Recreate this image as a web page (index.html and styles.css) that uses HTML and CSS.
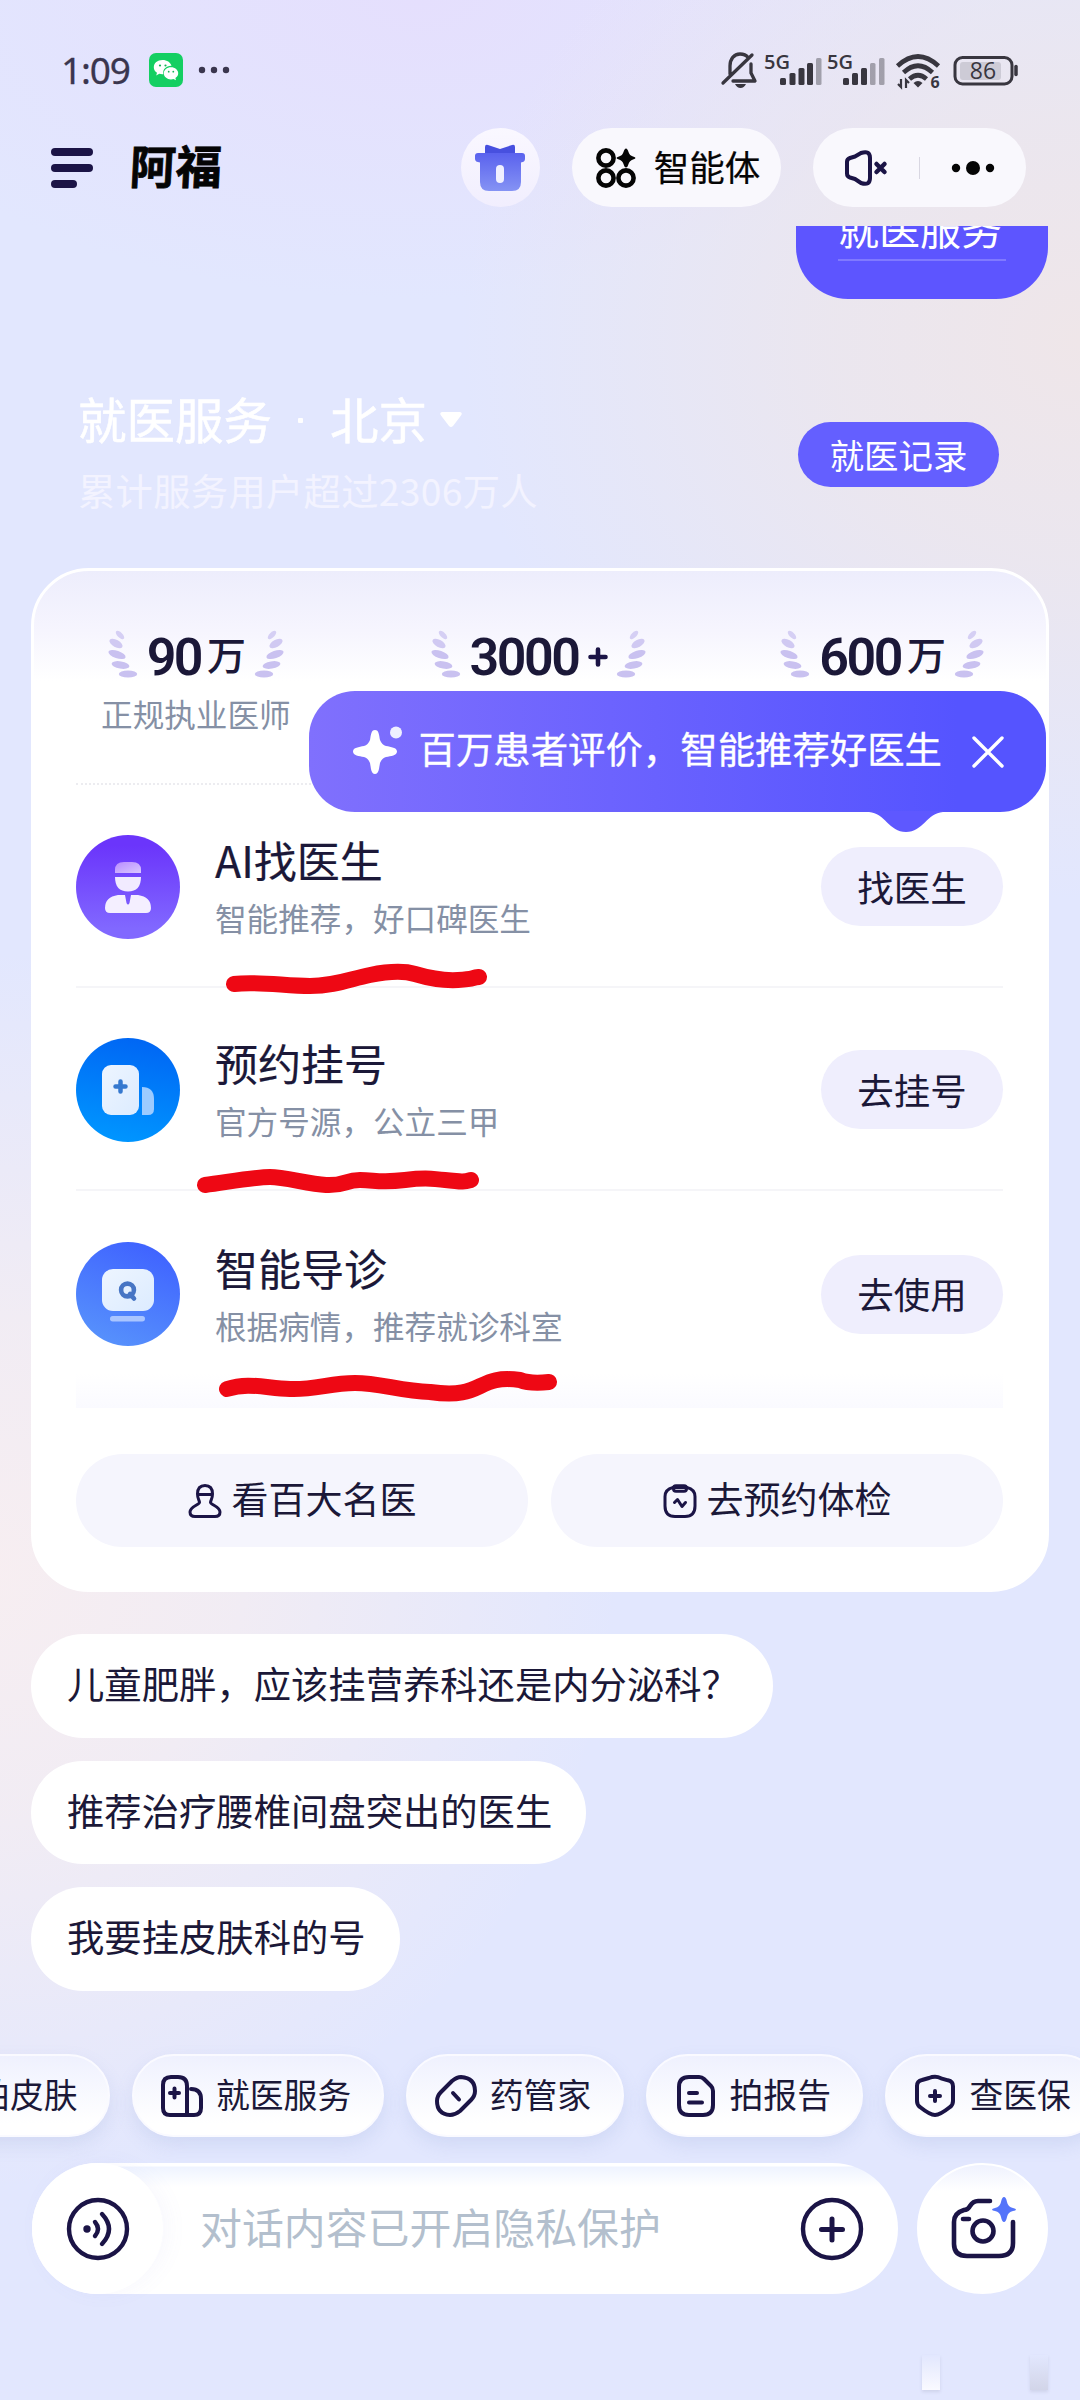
FILE: index.html
```html
<!DOCTYPE html>
<html lang="zh-CN">
<head>
<meta charset="utf-8">
<title>阿福</title>
<link rel="stylesheet" href="styles.css">
</head>
<body>
<svg width="0" height="0" class="defs" aria-hidden="true">
  <defs>
    <g id="laurel" fill="#c9c1f0">
      <ellipse cx="12" cy="5" rx="5.4" ry="2.6" transform="rotate(45 12 5)" opacity=".75"/>
      <ellipse cx="8" cy="13.5" rx="7.2" ry="3.6" transform="rotate(28 8 13.5)" opacity=".85"/>
      <ellipse cx="9" cy="24.5" rx="9" ry="3.7" transform="rotate(19 9 24.5)"/>
      <ellipse cx="12.5" cy="35" rx="9" ry="3.6" transform="rotate(10 12.5 35)"/>
      <ellipse cx="20" cy="44" rx="9.2" ry="3.6"/>
    </g>
    <linearGradient id="giftG" x1="0" y1="0" x2="0" y2="1"><stop offset="0" stop-color="#5a62ee"/><stop offset="1" stop-color="#8593f4"/></linearGradient>
    <linearGradient id="capG" x1="0" y1="0" x2="1" y2="1"><stop offset="0" stop-color="#b98cff"/><stop offset="1" stop-color="#d9c8ff"/></linearGradient>
    <linearGradient id="paper" x1="0" y1="0" x2="1" y2="1"><stop offset="0" stop-color="#edf5ff"/><stop offset="1" stop-color="#dcebff"/></linearGradient>
  </defs>
</svg>
<div class="phone">
  <div class="status">
    <div class="status-left">
      <span class="clock">1:09</span>
      <svg class="wechat" width="34" height="34" viewBox="0 0 34 34"><rect width="34" height="34" rx="7" fill="#14cf62"/><path d="M13.500 7c-5 0-8.700 3.100-8.700 7.200 0 2.300 1.200 4.300 3.200 5.600l-.8 2.600 3.100-1.600c1.500.5 3 .5 4 .4-.8-5 3-8.600 8.200-8.400C21.500 9.300 18 7 13.500 7z" fill="#fff"/><path d="M22 14.200c-4 0-7.200 2.700-7.200 6.100s3.200 6.100 7.200 6.100c.9 0 1.700-.1 2.500-.4l2.500 1.300-.6-2.200c1.800-1.100 2.800-2.800 2.800-4.800 0-3.400-3.200-6.100-7.200-6.100z" fill="#fff"/><g fill="#14b557"><circle cx="11" cy="12.500" r="1.100"/><circle cx="16.500" cy="12.500" r="1.100"/><circle cx="19.700" cy="18.700" r=".9"/><circle cx="24.300" cy="18.700" r=".9"/></g></svg>
      <svg width="32" height="8" viewBox="0 0 32 8" fill="#3a364e"><circle cx="4" cy="4" r="3.200"/><circle cx="16" cy="4" r="3.200"/><circle cx="28" cy="4" r="3.200"/></svg>
    </div>
    <svg class="status-right" width="300" height="44" viewBox="0 0 300 44">
      <g fill="none" stroke="#38363f" stroke-width="3.300" stroke-linecap="round" stroke-linejoin="round">
        <path d="M10 24V16c0-7 4-12 10-12 4 0 6.500 1.500 8 3.500M31 14v9l4 8H13M3 33L32 5"/>
      </g>
      <path d="M15 34h11q-2 4-5.500 4T15 34z" fill="#38363f"/>
      <g fill="#38363f"><text class="net" x="44" y="18.500">5G</text><text class="net" x="107" y="18.500">5G</text>
        <rect x="60" y="28" width="6" height="7" rx="1.500"/><rect x="69.500" y="23" width="6" height="12" rx="1.500"/><rect x="78.500" y="18" width="6" height="17" rx="1.500"/><rect x="87" y="13" width="6" height="22" rx="1.500"/><rect x="96" y="8" width="5.500" height="27" rx="1.500" opacity=".4"/>
        <rect x="123" y="28" width="6" height="7" rx="1.500"/><rect x="132" y="23" width="6" height="12" rx="1.500"/><rect x="141" y="18" width="6" height="17" rx="1.500"/><rect x="150" y="13" width="5.500" height="22" rx="1.500" opacity=".4"/><rect x="159" y="8" width="5.500" height="27" rx="1.500" opacity=".4"/>
        <path d="M193.500 33q4.500-4 9 0l-4.500 4.500z"/>
        <text class="six" x="210.500" y="37.500">6</text></g>
      <path d="M177.500 16q20.500-19 41 0M183.500 22.500q14.500-13.500 29 0M189.500 29q8.500-7.500 17 0" fill="none" stroke="#38363f" stroke-width="4.600"/>
      <path d="M181 29v8l-3-3M186 38v-8l3 3" stroke="#38363f" stroke-width="2.200" fill="none"/>
      <rect x="235" y="7.500" width="57" height="26.500" rx="7.500" fill="none" stroke="#38363f" stroke-width="3"/><rect x="240" y="12" width="41" height="18" rx="3" fill="#cdcbd6"/><path d="M296 16.500v8" stroke="#38363f" stroke-width="3.500" stroke-linecap="round"/>
      <text class="batt" x="263" y="29" text-anchor="middle" fill="#38363f">86</text>
    </svg>
  </div>

  <header class="header">
    <svg width="42" height="40" viewBox="0 0 42 40" fill="#1b1446"><rect width="42" height="8" rx="4"/><rect y="16" width="42" height="8" rx="4"/><rect y="32" width="26" height="8" rx="4"/></svg>
    <h1 class="brand">阿福</h1>
    <div class="gift"><svg width="50" height="48" viewBox="0 0 50 48"><path d="M10 12V3q0-3 3-2l12 4 12-4q3-1 3 2v9z" fill="#4750df"/><path d="M3 9h44q3 0 3 3v3q0 3-4 3.500V38q0 9-9 9H14q-9 0-9-9V18.500Q0 18 0 15v-3q0-3 3-3z" fill="url(#giftG)"/><rect x="21" y="21" width="8" height="18" rx="4" fill="#f0f0ff"/></svg></div>
    <div class="pill agents"><svg width="40" height="40" viewBox="0 0 40 40"><g fill="none" stroke="#050505" stroke-width="4.600"><circle cx="10" cy="10" r="7.600"/><circle cx="10" cy="30" r="7.600"/><circle cx="30" cy="30" r="7.600"/></g><path d="M30 .5q1.500 0 2.500 3.500 1 3.500 4.500 4.500 2.500.7 2.500 1.500t-2.500 1.500q-3.500 1-4.500 4.500T30 19.500 27.500 16q-1-3.500-4.500-4.500-2.500-.7-2.500-1.500t2.500-1.500q3.500-1 4.500-4.500T30 .5z" fill="#050505"/></svg><span>智能体</span></div>
    <div class="pill controls">
      <svg width="44" height="36" viewBox="0 0 44 36" fill="none" stroke="#1b1446" stroke-width="4" stroke-linejoin="round" stroke-linecap="round"><path d="M3 12q0-3 3-4l5-1.500 6-3.500q9-3 9 5v20q0 8-9 5l-6-4-5-1.500q-3-1-3-4z"/><path d="M32.500 14l8 8M40.500 14l-8 8" stroke-width="4.500"/></svg>
      <i class="bar"></i>
      <svg width="44" height="14" viewBox="0 0 44 14" fill="#050505"><circle cx="5" cy="7" r="4.200"/><circle cx="22" cy="7" r="7"/><circle cx="39" cy="7" r="4.200"/></svg>
    </div>
  </header>

  <main class="feed">
    <div class="sent"><span>就医服务</span></div>
    <section class="banner">
      <div>
        <h2>就医服务<i class="dot"></i>北京<svg width="24" height="16" viewBox="0 0 24 16" fill="#fff"><path d="M3 0h18q3 1 1 3.500L14 14q-2 2-4 0L2 3.500Q0 1 3 0z"/></svg></h2>
        <p>累计服务用户超过2306万人</p>
      </div>
      <button class="record">就医记录</button>
    </section>

    <section class="card">
      <div class="stats">
        <div class="stat"><div class="num"><svg width="30" height="48" viewBox="0 0 30 48"><use href="#laurel"/></svg><strong>90</strong><em>万</em><svg class="flip" width="30" height="48" viewBox="0 0 30 48"><use href="#laurel"/></svg></div><small>正规执业医师</small></div>
        <div class="stat"><div class="num"><svg width="30" height="48" viewBox="0 0 30 48"><use href="#laurel"/></svg><strong>3000</strong><svg class="plus" width="20" height="20" viewBox="0 0 20 20"><path d="M2.500 10h15M10 2.500v15" stroke="#1b1446" stroke-width="4.600" stroke-linecap="round"/></svg><svg class="flip" width="30" height="48" viewBox="0 0 30 48"><use href="#laurel"/></svg></div></div>
        <div class="stat"><div class="num"><svg width="30" height="48" viewBox="0 0 30 48"><use href="#laurel"/></svg><strong>600</strong><em>万</em><svg class="flip" width="30" height="48" viewBox="0 0 30 48"><use href="#laurel"/></svg></div></div>
      </div>

      <div class="row">
        <svg class="ico" viewBox="0 0 104 104"><defs><linearGradient id="g1" x1="0" y1="0" x2="0" y2="1"><stop offset=".1" stop-color="#6b35fb"/><stop offset=".9" stop-color="#8168ff"/></linearGradient></defs><circle cx="52" cy="52" r="52" fill="url(#g1)"/><path d="M39 38V35q0-8 9-8h8q9 0 9 8v3z" fill="url(#capG)"/><path d="M39 42h26q0 14.500-13 14.500T39 42z" fill="#f1ebff"/><path d="M42 60h7l1.500 8q1.500 3 3 0L55 60h7q13 2 13 13 0 5-5 5H34q-5 0-5-5 0-11 13-13z" fill="#f4efff"/></svg>
        <div class="info"><h3>AI找医生</h3><p>智能推荐，好口碑医生</p></div>
        <button>找医生</button>
      </div>
      <div class="row">
        <svg class="ico" viewBox="0 0 104 104"><defs><linearGradient id="g2" x1=".6" y1="0" x2=".4" y2="1"><stop offset="0" stop-color="#0066f4"/><stop offset="1" stop-color="#0096ff"/></linearGradient></defs><circle cx="52" cy="52" r="52" fill="url(#g2)"/><rect x="26" y="27" width="37" height="50" rx="9" fill="url(#paper)"/><path d="M66 49q12 0 12 12v10q0 6-6 6h-6z" fill="#9ccbff"/><path d="M44.500 43.500v10M39.500 48.500h10" stroke="#3578cf" stroke-width="4.500" stroke-linecap="round"/></svg>
        <div class="info"><h3>预约挂号</h3><p>官方号源，公立三甲</p></div>
        <button>去挂号</button>
      </div>
      <div class="row last">
        <svg class="ico" viewBox="0 0 104 104"><defs><linearGradient id="g3" x1=".7" y1="0" x2=".3" y2="1"><stop offset="0" stop-color="#3f62ff"/><stop offset="1" stop-color="#5792fc"/></linearGradient></defs><circle cx="52" cy="52" r="52" fill="url(#g3)"/><rect x="26" y="27" width="52" height="42" rx="11" fill="url(#paper)"/><rect x="34" y="74" width="35" height="5.500" rx="2.700" fill="#a9c5ff"/><g fill="none" stroke="#4775c4" stroke-width="4.600" stroke-linecap="round"><circle cx="51.500" cy="48" r="6.400"/><path d="M54 52l4 4.500"/></g></svg>
        <div class="info"><h3>智能导诊</h3><p>根据病情，推荐就诊科室</p></div>
        <button>去使用</button>
      </div>

      <div class="links">
        <button><svg width="34" height="34" viewBox="0 0 34 34" fill="none" stroke="#1b1446" stroke-width="3" stroke-linejoin="round"><path d="M9.500 10q0-8.500 7.500-8.500t7.500 8.500c0 5-2 6-2 8.500 0 2 9.500 4 9.500 9.500 0 3-1.500 4.500-5 4.500H7C3.500 32.500 2 31 2 28c0-5.500 9.500-7.500 9.500-9.500 0-2.500-2-3.500-2-8.500zM9.500 10.500h15"/></svg><span>看百大名医</span></button>
        <button><svg width="34" height="34" viewBox="0 0 34 34" fill="none" stroke="#1b1446" stroke-width="3" stroke-linejoin="round" stroke-linecap="round"><path d="M10 3.500h14q8 2 8 9V22q0 10.500-10 10.500H12Q2 32.500 2 22v-9.500q0-7 8-9z"/><rect x="10.500" y="1.800" width="13" height="5.500" rx="2.500"/><path d="M11.500 18.500l3-3 4.500 7 3.500-4"/></svg><span>去预约体检</span></button>
      </div>

      <div class="tip">
        <svg width="50" height="52" viewBox="0 0 50 52"><path d="M22 4c4 0 4 5 5 10q2 5 6 6c5 1 11 1.500 11 5.500s-6 4.500-11 5.500q-4 1-6 6c-1 5-1 11-5 11s-4-6-5-11q-2-5-6-6C6 30 0 29.500 0 25.500S6 21 11 20q4-1 6-6c1-5 1-10 5-10z" fill="#fff"/><circle cx="43" cy="6.500" r="6" fill="#eef0ff"/></svg>
        <span>百万患者评价，智能推荐好医生</span>
        <svg class="close" width="32" height="32" viewBox="0 0 32 32" stroke="#fff" stroke-width="3.400" stroke-linecap="round"><path d="M2 2l28 28M30 2L2 30"/></svg>
        <svg class="tail" width="74" height="22" viewBox="0 0 74 22"><path d="M0 0v1c16 1 20 20 37 20S58 2 74 1V0z" fill="#5e58ff"/></svg>
      </div>
      <svg class="marks" width="1018" height="1024" viewBox="31 568 1018 1024" fill="none" stroke="#ee0814" stroke-width="16" stroke-linecap="round" stroke-linejoin="round">
        <path d="M234 984C258 981 285 986 310 986S350 979 370 975S405 971 415 974S440 981 458 980S470 978 479 977"/>
        <path d="M205 1185C228 1182 255 1177 270 1177S308 1184 326 1185S345 1180 360 1180S380 1183 405 1180S430 1179 445 1180S460 1183 471 1180"/>
        <path d="M227 1389C248 1382 265 1388 290 1389S330 1383 355 1383S400 1391 430 1392C485 1400 475 1374 520 1380Q530 1384 549 1382"/>
      </svg>
    </section>

    <div class="ask">儿童肥胖，应该挂营养科还是内分泌科？</div>
    <div class="ask">推荐治疗腰椎间盘突出的医生</div>
    <div class="ask">我要挂皮肤科的号</div>
  </main>

  <footer class="dock">
    <nav class="tools">
      <div class="chip"><span>拍皮肤</span></div>
      <div class="chip"><svg width="42" height="42" viewBox="0 0 42 42"><path d="M2 10q0-8 8-8h7q9 0 9 9v29H9q-7 0-7-7zM30 14q10 0 10 10v9q0 7-7 7h-7M13.500 13.500v9M9 18h9"/></svg><span>就医服务</span></div>
      <div class="chip"><svg width="42" height="42" viewBox="0 0 42 42"><path d="M17 6q5-4 9-4 14 1 14 14 0 5-4 9L25 36q-5 4-10 4Q2 39 2 26q0-5 4-9zM18 18l6 6.500"/></svg><span>药管家</span></div>
      <div class="chip"><svg width="42" height="42" viewBox="-2 0 42 42"><path d="M12 2h10q3 0 5 2l7 7q2 2 2 5v14q0 10-10 10H12Q2 40 2 30V12Q2 2 12 2zM12 18h8M12 27.500h13"/></svg><span>拍报告</span></div>
      <div class="chip"><svg width="42" height="42" viewBox="-1 0 42 42"><path d="M20 1.800q3 0 6 1.500l7 2q5 1 5 6V26q0 4-3 6-10 8-15 8T5 32q-3-2-3-6V11q0-5 5-6l7-2q3-1.200 6-1.200zM20 16v10M15 21h10"/></svg><span>查医保</span></div>
    </nav>
    <div class="composer">
      <div class="input">
        <div class="voice"><svg width="64" height="64" viewBox="0 0 64 64" fill="none" stroke="#1b1446" stroke-width="4.400" stroke-linecap="round"><circle cx="32" cy="32" r="29"/><circle cx="21" cy="32" r="3.700" fill="#1b1446" stroke="none"/><path d="M29 25q6 7 0 14M36 17q14 15 0 30"/></svg></div>
        <span class="placeholder">对话内容已开启隐私保护</span>
        <svg width="64" height="64" viewBox="0 0 64 64" fill="none" stroke="#1b1446" stroke-width="4.400" stroke-linecap="round"><circle cx="32" cy="32" r="29"/><path d="M32 22v21M21.500 32.500h21" stroke-width="5"/></svg>
      </div>
      <div class="camera"><svg width="64" height="62" viewBox="0 0 64 62" fill="none" stroke="#1b1446" stroke-width="4.600" stroke-linecap="round" stroke-linejoin="round"><path d="M38 5H26q-5 0-8 5-2 4-6 4-10 3-10 12v22q0 12 13 12h32q14 0 14-13V26M11 23h6"/><circle cx="31" cy="35" r="10.500"/><path d="M52 1q2 0 3 5t6 6q3 .5 3 1.500t-3 1.500q-5 1-6 6t-3 5-3-5-6-6q-3-.5-3-1.500t3-1.500q5-1 6-6t3-5z" fill="#5474fa" stroke="none"/></svg></div>
    </div>
    <div class="ghost"><i></i><i></i></div>
  </footer>
</div>
</body>
</html>
```
FILE: styles.css
```css
* { box-sizing: border-box; margin: 0; padding: 0; }
body { width: 1080px; font-family: "Noto Sans CJK SC", sans-serif; color: #1b1838; }
svg { display: block; flex: none; overflow: visible; }
button { border: 0; font: inherit; color: inherit; }
.defs { position: absolute; }

.phone {
  width: 1080px; height: 2400px; overflow: hidden; display: flex; flex-direction: column;
  background:
    radial-gradient(ellipse 620px 560px at 1080px 340px, #efe6e9 0%, rgba(237,230,235,.8) 40%, rgba(234,230,245,0) 100%),
    radial-gradient(ellipse 640px 620px at -20px 1570px, #f7eef1 0%, rgba(244,237,242,.85) 40%, rgba(235,234,248,0) 100%),
    radial-gradient(ellipse 600px 300px at 420px 0, #e5dffd 0%, rgba(228,224,254,0) 100%),
    #e2e7fe;
}

.status { height: 128px; padding: 14px 60px 0 61px; display: flex; justify-content: space-between; align-items: flex-start; }
.status-left { display: flex; align-items: center; height: 84px; padding-top: 28px; gap: 15px; }
.status-left .wechat { margin-left: 4px; }
.clock { font: 400 37px/56px "Noto Sans", sans-serif; letter-spacing: -1.2px; color: #3a364e; width: 69px; -webkit-text-stroke: .3px #3a364e; }
.status-right { margin-top: 36px; }
.net { font: 600 20px "Open Sans", sans-serif; }
.six { font: 700 16px "Open Sans", sans-serif; }
.batt { font: 500 23px "Open Sans", sans-serif; }

.header { height: 79px; padding: 0 54px 0 51px; display: flex; align-items: center; flex: none; }
.brand { font-size: 46px; font-weight: 700; line-height: 78px; width: 94px; margin: -7px 0 0 37px; white-space: nowrap; color: #050505; -webkit-text-stroke: .8px #050505; transform: skewX(-3deg); }
.gift { width: 79px; height: 79px; margin-left: 237px; border-radius: 50%; background: linear-gradient(#faf8ff, #f1eefe); display: flex; align-items: center; justify-content: center; }
.pill { height: 79px; border-radius: 40px; background: #f9f8fd; display: flex; align-items: center; }
.agents { width: 210px; margin-left: 32px; padding-left: 24px; gap: 18px; font-size: 35.500px; color: #050505; white-space: nowrap; -webkit-text-stroke: .2px; }
.agents span { margin-top: -5px; }
.controls { width: 213px; margin-left: 32px; padding-left: 31px; }
.bar { width: 1px; height: 22px; background: #d9d7e2; margin: 0 31px 0 31px; }

.feed { margin-top: 19px; height: 1804px; flex: none; overflow: hidden; padding: 0 31px; display: flex; flex-direction: column; align-items: flex-start; }
.sent { align-self: flex-end; margin-top: -58px; width: 252px; height: 130.500px; flex: none; border-radius: 52px; background: #5d55ff; padding: 36px 42px; margin-right: 1px; }
.sent span { display: block; color: #fff; font-size: 41px; line-height: 47px; height: 57px; white-space: nowrap; border-bottom: 2px solid #8079ff; }

.banner { width: 100%; padding: 91px 50px 0 47px; height: 269.500px; flex: none; display: flex; justify-content: space-between; align-items: flex-start; }
.banner h2 { margin-top: -4px; display: flex; align-items: center; font-size: 48.500px; line-height: 64px; font-weight: 400; color: #fff; white-space: nowrap; -webkit-text-stroke: .5px; }
.banner .dot { width: 5px; height: 5px; margin: 5px 27px 0 26px; background: #fff; border-radius: 1px; }
.banner h2 svg { margin: 4px 0 0 12px; }
.banner p { margin-top: 12px; font-size: 37.300px; letter-spacing: .3px; line-height: 56px; color: #f3f3ff; white-space: nowrap; }
.record { margin-top: 32px; width: 201px; height: 65px; border-radius: 33px; background: #645fff; color: #fff; font-size: 34.400px; line-height: 59px; }

.card { position: relative; width: 1018px; height: 1024px; flex: none; border: 3px solid #fff; border-radius: 58px; padding: 0 43px 0 42px; background: linear-gradient(#ededfc 0, #f6f5fe 60px, #fff 110px); margin-bottom: 42px; }
.stats { height: 214px; padding-top: 58px; display: flex; border-bottom: 2px dotted #ececf0; }
.stat { display: flex; flex-direction: column; align-items: center; }
.stat:nth-child(1) { width: 240px; }
.stat:nth-child(2) { width: 446px; }
.stat:nth-child(3) { width: 242px; }
.num { height: 50px; display: flex; align-items: center; white-space: nowrap; }
.num strong { font: 600 52px/50px Roboto, sans-serif; letter-spacing: -2.500px; margin: 7px 0 0 9px; }
.num em { font-style: normal; font-weight: 500; font-size: 39px; line-height: 50px; margin: -2px 8px 0 6px; }
.plus { margin: 5px 8px 0 10px; }
.flip { transform: scaleX(-1); }
.stat small { margin-top: 11px; font-size: 31.600px; line-height: 46px; color: #8590a5; white-space: nowrap; }

.row { height: 203px; padding-top: 2px; display: flex; align-items: center; border-bottom: 2px solid #f5f5f8; }
.row.last { height: 217px; padding-bottom: 13px; border: 0; background: linear-gradient(#fff 84%, #fafaff); }
.ico { width: 104px; height: 104px; }
.info { margin-left: 35px; flex: 1; }
.info h3 { margin-top: -3px; font-size: 43px; line-height: 58px; font-weight: 400; white-space: nowrap; -webkit-text-stroke: .2px; }
.info p { font-size: 31.600px; line-height: 46px; margin-top: 6px; color: #8590a5; white-space: nowrap; }
.row button { width: 182px; height: 79px; border-radius: 40px; background: #efeefd; font-size: 36.500px; line-height: 74px; }

.links { margin-top: 46px; display: grid; grid-template-columns: 1fr 1fr; gap: 23px; }
.links button { height: 93px; border-radius: 47px; background: #f5f5fd; display: flex; align-items: center; justify-content: center; gap: 10px; font-size: 37px; line-height: 88px; white-space: nowrap; }
.links span { margin-top: -5px; }

.tip { position: absolute; left: 275px; top: 120px; width: 737px; height: 121px; border-radius: 46px; background: linear-gradient(90deg, #8070fd, #5554ff 88%); display: flex; align-items: center; padding-left: 44px; color: #fff; font-size: 37.400px; white-space: nowrap; -webkit-text-stroke: .3px; }
.tip span { margin: -7px 0 0 15.500px; }
.tip .close { margin-left: 30px; }
.tip .tail { position: absolute; left: 560px; top: 120px; }
.marks { position: absolute; left: -3px; top: -3px; }

.ask { height: 103.500px; flex: none; margin-bottom: 23px; padding: 0 34px 0 36px; border-radius: 52px; background: #fff; font-size: 37.350px; line-height: 99px; white-space: nowrap; }

.dock { height: 370px; flex: none; display: flex; flex-direction: column; }
.tools { display: flex; gap: 22px; margin: 24px 0 26px -132px; }
.chip { height: 83px; flex: none; padding: 0 30.500px 0 27px; border-radius: 42px; border: 2px solid #fafaff; background: linear-gradient(#eff1fe, #fff 85%); box-shadow: 0 8px 18px rgba(120,140,200,.16); display: flex; align-items: center; gap: 13px; font-size: 33.800px; line-height: 78px; white-space: nowrap; }
.chip:first-child { width: 242px; justify-content: flex-end; }
.chip span { margin-top: -4px; }
.chip svg { fill: none; stroke: #1b1446; stroke-width: 4; stroke-linecap: round; stroke-linejoin: round; }
.composer { display: flex; gap: 19px; padding-left: 32px; }
.input { width: 866px; height: 131px; border-radius: 66px; background: linear-gradient(#fff 0, #fff 3px, #eff4ff 4px, #fff 24px); display: flex; align-items: center; padding-right: 34px; }
.voice { width: 131px; height: 131px; border-radius: 50%; background: #fff; box-shadow: 6px 0 20px rgba(120,120,220,.05); display: flex; align-items: center; justify-content: center; }
.placeholder { flex: 1; margin: -7px 0 0 37px; font-size: 41.900px; color: #b3bfcd; white-space: nowrap; }
.camera { width: 131px; height: 131px; border-radius: 50%; border: 2px solid #fff; background: linear-gradient(#eff2fe, #fff 26px); display: flex; align-items: center; justify-content: center; }
.camera svg { margin: -3px 0 0 3px; }
.ghost { display: flex; justify-content: flex-end; gap: 90px; padding: 61px 32px 0 0; }
.ghost i { width: 18px; height: 35px; background: linear-gradient(rgba(250,250,255,0), #fafaff); box-shadow: 0 2px 3px rgba(100,100,130,.15); }
.ghost i:last-child { background: linear-gradient(rgba(210,213,232,0), #d2d5e8); }
```
